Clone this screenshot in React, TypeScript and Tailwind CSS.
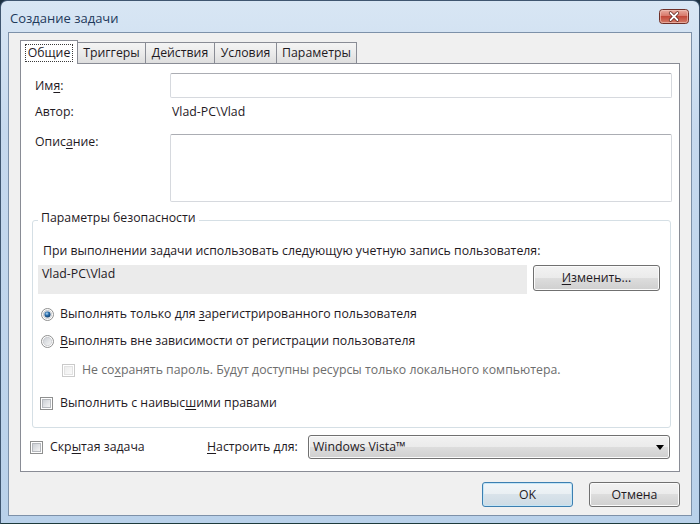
import React from "react";

const Mn = ({ children }: { children: React.ReactNode }) => (
  <span className="underline decoration-[1px] underline-offset-[2px]">{children}</span>
);

function CloseButton() {
  return (
    <svg width="30" height="15" viewBox="0 0 30 15" className="shrink-0">
      <defs>
        <linearGradient id="cl" x1="0" y1="0" x2="0" y2="1">
          <stop offset="0" stopColor="#eab0a4" />
          <stop offset="0.45" stopColor="#d8796b" />
          <stop offset="0.5" stopColor="#c2493a" />
          <stop offset="1" stopColor="#d5806c" />
        </linearGradient>
      </defs>
      <rect x="0.5" y="0.5" width="29" height="14" rx="3" fill="url(#cl)" stroke="#6e3028" />
      <rect x="1.5" y="1.5" width="27" height="12" rx="2" fill="none" stroke="#f3c9bf" strokeOpacity="0.6" />
      <path d="M11.5 4 L18.5 11 M18.5 4 L11.5 11" stroke="#5a1e16" strokeWidth="3.2" strokeLinecap="round" />
      <path d="M11.5 4 L18.5 11 M18.5 4 L11.5 11" stroke="#ffffff" strokeWidth="1.8" strokeLinecap="round" />
    </svg>
  );
}

function CheckBox({ disabled = false }: { disabled?: boolean }) {
  const id = disabled ? "cbd" : "cb";
  return (
    <svg width="13" height="13" viewBox="0 0 13 13" className="shrink-0">
      <defs>
        <linearGradient id={id} x1="0" y1="0" x2="1" y2="1">
          <stop offset="0" stopColor={disabled ? "#ececec" : "#c9cdd3"} />
          <stop offset="1" stopColor={disabled ? "#fafafa" : "#f7f7f7"} />
        </linearGradient>
      </defs>
      <rect x="0.5" y="0.5" width="12" height="12" fill="#fff" stroke={disabled ? "#cacaca" : "#8e8f8f"} />
      <rect x="2.5" y="2.5" width="8" height="8" fill={`url(#${id})`} stroke={disabled ? "#e2e2e2" : "#b5b8bd"} />
    </svg>
  );
}

function Radio({ checked = false }: { checked?: boolean }) {
  return (
    <svg width="13" height="13" viewBox="0 0 13 13" className="shrink-0">
      <defs>
        <linearGradient id="rb" x1="0" y1="0" x2="1" y2="1">
          <stop offset="0" stopColor="#c9cdd3" />
          <stop offset="1" stopColor="#f7f7f7" />
        </linearGradient>
        <radialGradient id="rd" cx="0.4" cy="0.35" r="0.7">
          <stop offset="0" stopColor="#b9dcf5" />
          <stop offset="0.45" stopColor="#2a6fae" />
          <stop offset="1" stopColor="#0d3762" />
        </radialGradient>
      </defs>
      <circle cx="6.5" cy="6.5" r="6" fill="#fff" stroke="#8e8f8f" />
      <circle cx="6.5" cy="6.5" r="4.2" fill="url(#rb)" stroke="#b8bbc0" strokeWidth="0.6" />
      {checked && <circle cx="6.5" cy="6.5" r="3" fill="url(#rd)" />}
    </svg>
  );
}

function Button({
  children,
  def = false,
  className = "",
}: {
  children: React.ReactNode;
  def?: boolean;
  className?: string;
}) {
  return (
    <div
      className={`flex items-center justify-center rounded-[3px] border ${
        def
          ? "border-[#3c7fb1] bg-[linear-gradient(180deg,#f1f6f9_0%,#e9eff3_49%,#d9e3ea_50%,#cddbe5_100%)] shadow-[inset_0_0_0_1px_#c4e5f6]"
          : "border-[#707070] bg-[linear-gradient(180deg,#f2f2f2_0%,#ebebeb_49%,#dddddd_50%,#cfcfcf_100%)] shadow-[inset_0_0_0_1px_#fbfbfb]"
      } ${className}`}
    >
      {children}
    </div>
  );
}

const tabs = [
  { label: "Триггеры", w: "w-[69px]" },
  { label: "Действия", w: "w-[70px]" },
  { label: "Условия", w: "w-[63px]" },
  { label: "Параметры", w: "w-[81px]" },
];

export default function App() {
  return (
    <div className="h-[524px] w-[700px] overflow-hidden bg-[#1c3040] font-['Open_Sans',sans-serif] text-[12.3px] leading-[16px] text-[#1f1a1f]">
      <div className="flex h-full flex-col rounded-t-[7px] border border-[#3f5670] border-b-[#1d3a3c] bg-[linear-gradient(180deg,#d8e6f4_0%,#c6d9ee_25%,#b9d1ea_100%)]">
        {/* title bar */}
        <div className="flex h-[31px] shrink-0 items-center justify-between pl-[9px] pr-[10px]">
          <span className="pt-[2px] text-[13px] text-[#1e395b]">Создание задачи</span>
          <CloseButton />
        </div>

        {/* client area */}
        <div className="mx-[7px] flex flex-1 flex-col border border-[#7d91a9] bg-[#f0f0f0] px-[11px] pt-[7px]">
          {/* tabs */}
          <div className="flex h-[23px] items-end">
            <div className="relative z-10 -mb-px flex h-[24px] w-[58px] items-center justify-center border border-b-0 border-[#898c95] bg-white">
              <span className="border border-dotted border-[#3a3a3a] px-[2px] leading-[16px]">Общие</span>
            </div>
            {tabs.map((t) => (
              <div
                key={t.label}
                className={`-ml-px flex h-[21px] ${t.w} items-center justify-center border border-b-0 border-[#898c95] bg-[linear-gradient(180deg,#f4f4f4_0%,#ebebeb_50%,#dedede_100%)]`}
              >
                {t.label}
              </div>
            ))}
          </div>

          {/* panel */}
          <div className="h-[409px] border border-[#898c95] bg-white pl-[14px] pr-[7px] pt-[9px]">
            <div className="flex h-[25px] items-center">
              <span className="w-[135px]">
                Им<Mn>я</Mn>:
              </span>
              <div className="h-[25px] w-[502px] rounded-[2px] border border-[#d6d9de] border-t-[#abadb3]" />
            </div>
            <div className="flex h-[28px] items-center">
              <span className="w-[135px]">Автор:</span>
              <span className="pl-[2px]">Vlad-PC\Vlad</span>
            </div>
            <div className="mt-[8px] flex items-start">
              <span className="w-[135px]">
                Опис<Mn>а</Mn>ние:
              </span>
              <div className="h-[68px] w-[502px] rounded-[2px] border border-[#d6d9de] border-t-[#abadb3]" />
            </div>

            {/* security group */}
            <div className="relative -ml-[3px] mt-[18px] h-[208px] w-[639px] rounded-[3px] border border-[#d5dfe5]">
              <span className="absolute -top-[11px] left-[5px] bg-white px-[3px]">Параметры безопасности</span>
              <div className="pl-[10px] pt-[22px]">
                При выполнении задачи использовать следующую учетную запись пользователя:
              </div>
              <div className="mt-[6px] flex items-start">
                <div className="ml-[5px] h-[29px] w-[489px] bg-[#ebebeb] px-[4px] pt-[1px]">Vlad-PC\Vlad</div>
                <Button className="ml-[6px] h-[26px] w-[127px]">
                  <span>
                    <Mn>И</Mn>зменить...
                  </span>
                </Button>
              </div>
              <div className="mt-[12px] flex h-[16px] items-center gap-[6px] pl-[8px]">
                <Radio checked />
                <span>
                  Выполнять только для <Mn>з</Mn>арегистрированного пользователя
                </span>
              </div>
              <div className="mt-[11px] flex h-[16px] items-center gap-[6px] pl-[8px]">
                <Radio />
                <span>
                  <Mn>В</Mn>ыполнять вне зависимости от регистрации пользователя
                </span>
              </div>
              <div className="mt-[13px] flex h-[16px] items-center gap-[7px] pl-[29px] text-[#6d6d6d]">
                <CheckBox disabled />
                <span>
                  Не со<Mn>х</Mn>ранять пароль. Будут доступны ресурсы только локального компьютера.
                </span>
              </div>
              <div className="mt-[17px] flex h-[16px] items-center gap-[7px] pl-[7px]">
                <CheckBox />
                <span>
                  Выполнить с наивыс<Mn>ш</Mn>ими правами
                </span>
              </div>
            </div>

            {/* bottom row */}
            <div className="-ml-[5px] mt-[7px] flex h-[24px] items-center">
              <div className="flex w-[177px] items-center gap-[7px]">
                <CheckBox />
                <span>
                  Скр<Mn>ы</Mn>тая задача
                </span>
              </div>
              <span className="w-[101px]">
                <Mn>Н</Mn>астроить для:
              </span>
              <div className="flex h-[24px] w-[362px] items-center justify-between rounded-[3px] border border-[#707070] bg-[linear-gradient(180deg,#f2f2f2_0%,#ebebeb_49%,#dddddd_50%,#cfcfcf_100%)] pl-[4px] pr-[5px] shadow-[inset_0_0_0_1px_#fbfbfb]">
                <span>Windows Vista™</span>
                <svg width="8" height="5" viewBox="0 0 8 5">
                  <path d="M0 0 H8 L4 5 Z" fill="#000" />
                </svg>
              </div>
            </div>
          </div>

          {/* dialog buttons */}
          <div className="mt-[10px] flex justify-end gap-[16px]">
            <Button def className="h-[25px] w-[91px]">
              OK
            </Button>
            <Button className="h-[25px] w-[91px]">Отмена</Button>
          </div>
        </div>
        <div className="h-[7px] shrink-0" />
      </div>
    </div>
  );
}
